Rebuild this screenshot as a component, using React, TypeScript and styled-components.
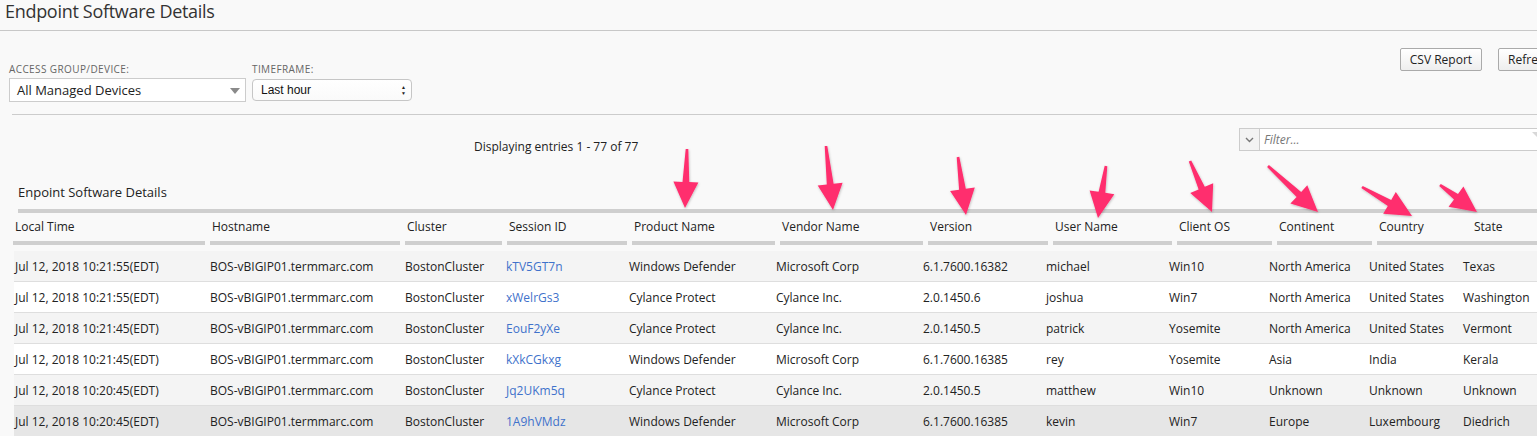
import React from "react";
import styled, { createGlobalStyle } from "styled-components";

const GlobalStyle = createGlobalStyle`
  body {
    margin: 0;
    background: #f9f9f9;
    overflow: hidden;
    font-family: "Open Sans", "Liberation Sans", sans-serif;
    color: #222;
  }
`;

const headCols = [
  { label: "Local Time", width: 197 },
  { label: "Hostname", width: 195 },
  { label: "Cluster", width: 102 },
  { label: "Session ID", width: 125 },
  { label: "Product Name", width: 148 },
  { label: "Vendor Name", width: 148 },
  { label: "Version", width: 125 },
  { label: "User Name", width: 124 },
  { label: "Client OS", width: 100 },
  { label: "Continent", width: 100 },
  { label: "Country", width: 95, joined: true },
  { label: "State", width: 200 },
];

const cellWidths = [195, 195, 101, 123, 147, 147, 123, 123, 100, 100, 94, 200];

const rows = [
  ["Jul 12, 2018 10:21:55(EDT)", "kTV5GT7n", "Windows Defender", "Microsoft Corp", "6.1.7600.16382", "michael", "Win10", "North America", "United States", "Texas"],
  ["Jul 12, 2018 10:21:55(EDT)", "xWelrGs3", "Cylance Protect", "Cylance Inc.", "2.0.1450.6", "joshua", "Win7", "North America", "United States", "Washington"],
  ["Jul 12, 2018 10:21:45(EDT)", "EouF2yXe", "Cylance Protect", "Cylance Inc.", "2.0.1450.5", "patrick", "Yosemite", "North America", "United States", "Vermont"],
  ["Jul 12, 2018 10:21:45(EDT)", "kXkCGkxg", "Windows Defender", "Microsoft Corp", "6.1.7600.16385", "rey", "Yosemite", "Asia", "India", "Kerala"],
  ["Jul 12, 2018 10:20:45(EDT)", "Jq2UKm5q", "Cylance Protect", "Cylance Inc.", "2.0.1450.5", "matthew", "Win10", "Unknown", "Unknown", "Unknown"],
  ["Jul 12, 2018 10:20:45(EDT)", "1A9hVMdz", "Windows Defender", "Microsoft Corp", "6.1.7600.16385", "kevin", "Win7", "Europe", "Luxembourg", "Diedrich"],
];

// annotation arrows: tail -> tip
const arrows = [
  [687, 149, 685, 208],
  [826, 146, 833, 210],
  [958, 157, 966, 215],
  [1106, 166, 1098, 218],
  [1190, 161, 1212, 212],
  [1268, 166, 1318, 212],
  [1362, 187, 1412, 216],
  [1440, 185, 1477, 212],
];

function arrowPoints(x1: number, y1: number, x2: number, y2: number) {
  const len = Math.hypot(x2 - x1, y2 - y1);
  const dx = (x2 - x1) / len;
  const dy = (y2 - y1) / len;
  const nx = -dy;
  const ny = dx;
  const head = 26;
  const bx = x2 - dx * head;
  const by = y2 - dy * head;
  const p = (x: number, y: number) => `${x.toFixed(1)},${y.toFixed(1)}`;
  return [
    p(x1 + nx * 1.3, y1 + ny * 1.3),
    p(bx + nx * 3.4, by + ny * 3.4),
    p(bx + nx * 12.5, by + ny * 12.5),
    p(x2, y2),
    p(bx - nx * 12.5, by - ny * 12.5),
    p(bx - nx * 3.4, by - ny * 3.4),
    p(x1 - nx * 1.3, y1 - ny * 1.3),
  ].join(" ");
}

const App: React.FC = () => {
  return (
    <Page>
      <GlobalStyle />
      <Title>Endpoint Software Details</Title>
      <Toolbar>
        <Filters>
          <Field>
            <FieldLabel>Access Group/Device:</FieldLabel>
            <DeviceSelect>
              All Managed Devices
              <DownTriangle />
            </DeviceSelect>
          </Field>
          <Field>
            <FieldLabel>Timeframe:</FieldLabel>
            <TimeSelect>
              Last hour
              <Spinner>
                <span>▲</span>
                <span>▼</span>
              </Spinner>
            </TimeSelect>
          </Field>
        </Filters>
        <Buttons>
          <Button>CSV Report</Button>
          <Button>Refresh</Button>
        </Buttons>
      </Toolbar>
      <Divider />
      <FilterRow>
        <Entries>Displaying entries 1 - 77 of 77</Entries>
        <FilterBox>
          <FilterToggle>
            <svg width="9" height="6" viewBox="0 0 9 6">
              <path d="M1 1 L4.5 4.5 L8 1" fill="none" stroke="#777" strokeWidth="1.4" />
            </svg>
          </FilterToggle>
          <FilterInput>Filter...</FilterInput>
          <FilterCorner />
        </FilterBox>
      </FilterRow>
      <Caption>Enpoint Software Details</Caption>
      <TopBar />
      <HeaderRow>
        {headCols.map((col) => (
          <HeadCell key={col.label} style={{ width: col.width }}>
            <HeadLabel>{col.label}</HeadLabel>
            <HeadBar $joined={!!col.joined} />
          </HeadCell>
        ))}
      </HeaderRow>
      <Rows>
        {rows.map((r, i) => {
          const cells = [r[0], "BOS-vBIGIP01.termmarc.com", "BostonCluster", ...r.slice(1)];
          return (
            <Row key={i} $shade={i === 5 ? "#e6e6e6" : i % 2 === 0 ? "#f4f4f4" : "#ffffff"}>
              {cells.map((c, j) => (
                <Cell key={j} $link={j === 3} style={{ width: cellWidths[j] }}>
                  {c}
                </Cell>
              ))}
            </Row>
          );
        })}
      </Rows>
      <Overlay width="1580" height="436" viewBox="0 0 1580 436">
        <defs>
          <filter id="sh" x="-20%" y="-20%" width="140%" height="140%">
            <feDropShadow dx="0.5" dy="1" stdDeviation="0.8" floodColor="#000" floodOpacity="0.25" />
          </filter>
        </defs>
        {arrows.map((a, i) => (
          <polygon key={i} points={arrowPoints(a[0], a[1], a[2], a[3])} fill="#ff2f6e" filter="url(#sh)" />
        ))}
      </Overlay>
    </Page>
  );
};

export default App;

const Page = styled.div`
  position: relative;
  width: 1580px;
  height: 436px;
  overflow: hidden;
  background: #f9f9f9;
`;

const Title = styled.h1`
  margin: 0;
  height: 30px;
  padding-left: 5px;
  font-size: 18px;
  font-weight: 400;
  line-height: 22px;
  letter-spacing: -0.3px;
  color: #333;
  border-bottom: 1px solid #c8c8c8;
`;

const Toolbar = styled.div`
  display: flex;
  justify-content: space-between;
  align-items: flex-start;
  padding: 17px 19px 0 9px;
`;

const Filters = styled.div`
  display: flex;
  gap: 6px;
  margin-top: 15px;
`;

const Field = styled.div`
  display: flex;
  flex-direction: column;
`;

const FieldLabel = styled.div`
  font-size: 10px;
  line-height: 12px;
  letter-spacing: 0.4px;
  text-transform: uppercase;
  color: #666;
  margin-bottom: 3px;
`;

const DeviceSelect = styled.div`
  position: relative;
  box-sizing: border-box;
  width: 237px;
  height: 24px;
  padding-left: 7px;
  background: #fff;
  border: 1px solid #ccc;
  font-size: 13px;
  line-height: 22px;
  color: #222;
`;

const DownTriangle = styled.span`
  position: absolute;
  right: 5px;
  top: 9px;
  width: 0;
  height: 0;
  border-left: 5px solid transparent;
  border-right: 5px solid transparent;
  border-top: 6px solid #8a8a8a;
`;

const TimeSelect = styled.div`
  position: relative;
  box-sizing: border-box;
  width: 160px;
  height: 22px;
  margin-top: 1px;
  padding-left: 8px;
  background: linear-gradient(#fff, #fafafa);
  border: 1px solid #c6c6c6;
  border-radius: 4px;
  font-family: "Liberation Sans", Arial, sans-serif;
  font-size: 12px;
  line-height: 20px;
  color: #111;
`;

const Spinner = styled.span`
  position: absolute;
  right: 5px;
  top: 4px;
  display: flex;
  flex-direction: column;
  font-size: 5px;
  line-height: 6px;
  color: #222;
`;

const Buttons = styled.div`
  display: flex;
  gap: 16px;
`;

const Button = styled.button`
  box-sizing: border-box;
  height: 23px;
  padding: 0 9px;
  font-family: "Open Sans", "Liberation Sans", sans-serif;
  font-size: 12px;
  color: #222;
  background: linear-gradient(#ffffff, #eeeeee);
  border: 1px solid #aaa;
  border-radius: 2px;
`;

const Divider = styled.div`
  height: 1px;
  margin: 12px 0 0 12px;
  background: #ccc;
`;

const FilterRow = styled.div`
  display: flex;
  align-items: flex-start;
  padding: 13px 35px 0 474px;
`;

const Entries = styled.div`
  margin-top: 11px;
  font-size: 12px;
  line-height: 16px;
  color: #222;
`;

const FilterBox = styled.div`
  position: relative;
  display: flex;
  margin-left: auto;
  width: 306px;
  height: 23px;
  box-sizing: border-box;
  border: 1px solid #ccc;
  background: #fff;
`;

const FilterToggle = styled.div`
  width: 19px;
  display: flex;
  align-items: center;
  justify-content: center;
  background: #f3f3f3;
  border-right: 1px solid #ccc;
`;

const FilterInput = styled.div`
  padding-left: 4px;
  font-size: 12px;
  line-height: 21px;
  font-style: italic;
  color: #777;
`;

const FilterCorner = styled.span`
  position: absolute;
  right: 6px;
  top: 3px;
  width: 0;
  height: 0;
  border-left: 6px solid transparent;
  border-top: 6px solid #d8d8d8;
`;

const Caption = styled.div`
  margin: 28px 0 0 18px;
  font-size: 13px;
  line-height: 18px;
  color: #222;
`;

const TopBar = styled.div`
  height: 4px;
  margin: 8px 0 0 18px;
  background: #cfcfcf;
`;

const HeaderRow = styled.div`
  display: flex;
  margin-left: 13px;
`;

const HeadCell = styled.div`
  flex-shrink: 0;
  display: flex;
  flex-direction: column;
`;

const HeadLabel = styled.div`
  padding: 6px 0 0 2px;
  font-size: 12px;
  line-height: 16px;
  color: #222;
  white-space: nowrap;
`;

const HeadBar = styled.div<{ $joined: boolean }>`
  height: 4px;
  margin-top: 6px;
  margin-right: ${(p) => (p.$joined ? 0 : 5)}px;
  background: #cfcfcf;
`;

const Rows = styled.div`
  margin: 6px 0 0 14px;
`;

const Row = styled.div<{ $shade: string }>`
  display: flex;
  height: 30px;
  padding-left: 1px;
  align-items: center;
  background: ${(p) => p.$shade};
  border-bottom: 1px solid #dedede;
`;

const Cell = styled.div<{ $link: boolean }>`
  flex-shrink: 0;
  font-size: 12px;
  white-space: nowrap;
  color: ${(p) => (p.$link ? "#3f72cb" : "#222")};
`;

const Overlay = styled.svg`
  position: absolute;
  left: 0;
  top: 0;
  pointer-events: none;
`;
